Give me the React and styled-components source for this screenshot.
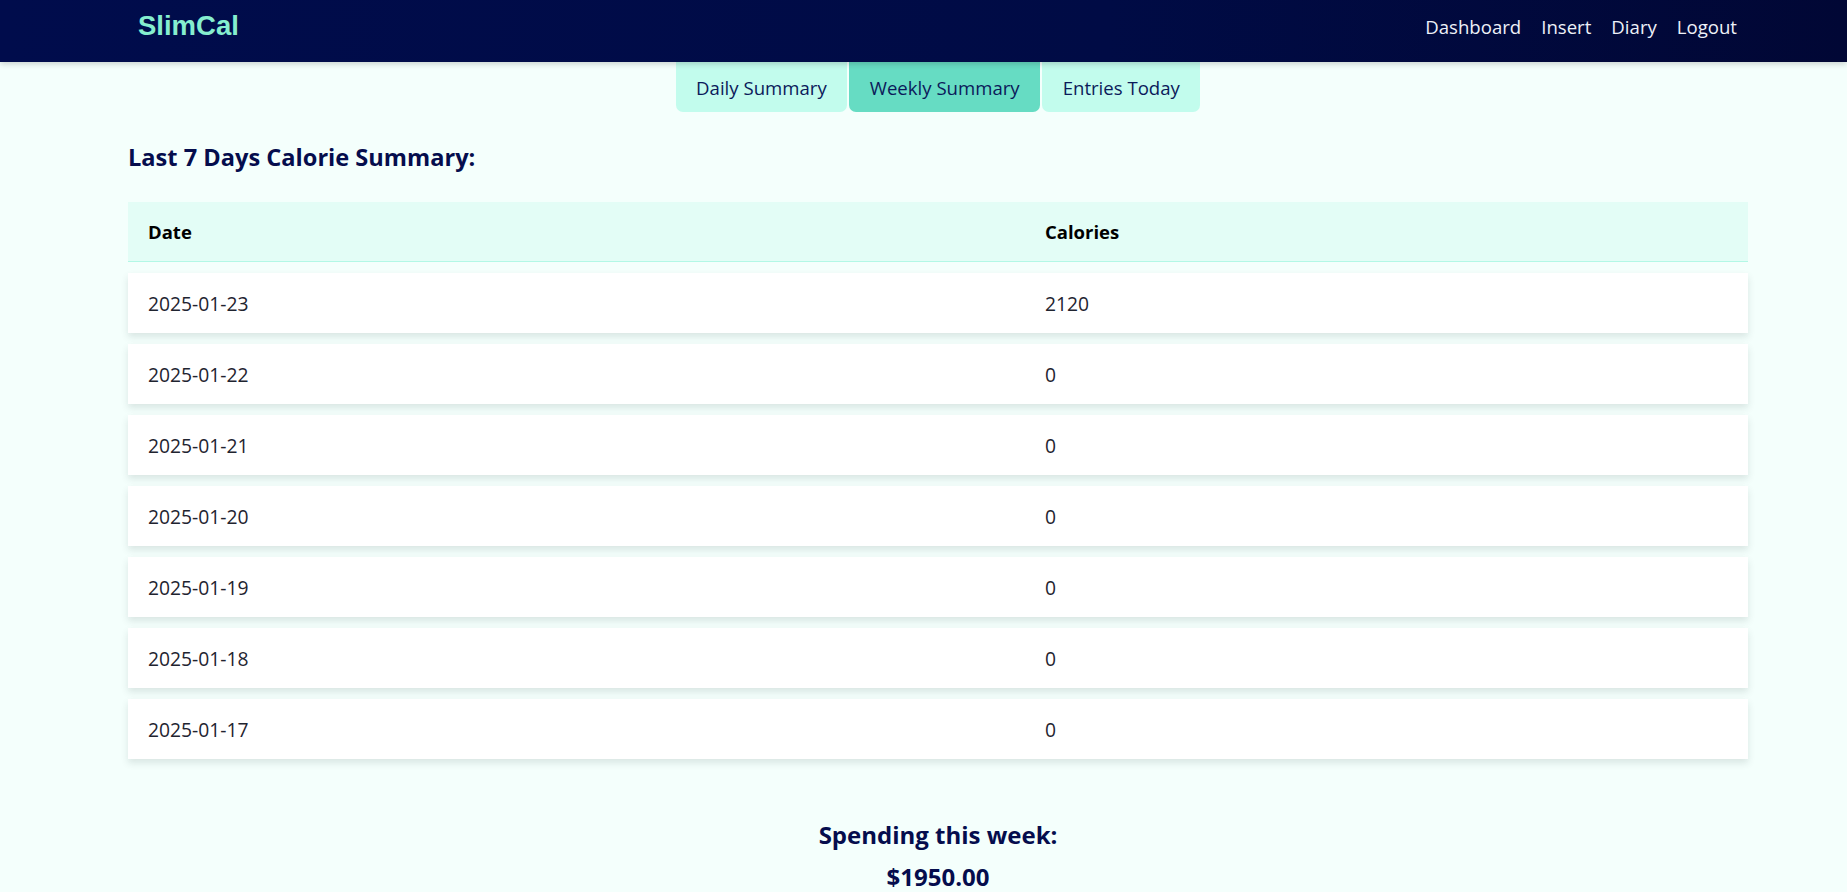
import React from 'react'
import styled, { createGlobalStyle } from 'styled-components'

const GlobalStyle = createGlobalStyle`
  body {
    margin: 0;
    background: #f4fffc;
    font-family: 'Open Sans', 'Noto Sans', sans-serif;
  }
`

const Navbar = styled.nav`
  position: relative;
  z-index: 2;
  height: 62px;
  box-sizing: border-box;
  padding: 0 110px 10px 138px;
  display: flex;
  align-items: center;
  justify-content: space-between;
  background: linear-gradient(90deg, #000c4c 0%, #000b45 60%, #010735 100%);
  box-shadow: 0 2px 6px rgba(0, 0, 0, 0.18);
`

const Logo = styled.div`
  font-family: 'Liberation Sans', Arial, sans-serif;
  font-weight: 700;
  font-size: 27.5px;
  color: #86eecf;
`

const NavLinks = styled.div`
  display: flex;
  gap: 20px;
`

const NavLink = styled.a`
  font-size: 18.6px;
  color: #eef1f8;
  text-decoration: none;
  cursor: pointer;
`

const Main = styled.main`
  padding: 0 99px 0 128px;
`

const TabBar = styled.div`
  display: flex;
  justify-content: center;
  gap: 2px;
`

const Tab = styled.button`
  height: 50px;
  padding: 0 20.5px;
  border: none;
  border-radius: 0 0 7px 7px;
  font-family: inherit;
  font-size: 18.6px;
  color: #0b1a5a;
  background: ${({ active }) => (active ? '#66dcc3' : '#c2fced')};
  cursor: pointer;
`

const Heading = styled.h2`
  margin: 30px 0 30px;
  font-size: 23.6px;
  line-height: 30px;
  font-weight: 700;
  color: #050d4d;
`

const Table = styled.div`
  display: flex;
  flex-direction: column;
  gap: 11px;
`

const Row = styled.div`
  display: grid;
  grid-template-columns: 897px 1fr;
  height: ${({ head }) => (head ? '59px' : '60px')};
  align-items: center;
  background: ${({ head }) => (head ? '#e3fdf6' : '#ffffff')};
  border-bottom: ${({ head }) => (head ? '1.5px solid #b3f8e6' : 'none')};
  box-shadow: ${({ head }) => (head ? 'none' : '0 4px 7px rgba(40, 60, 60, 0.13)')};
`

const Cell = styled.div`
  padding: 0 20px;
  font-size: ${({ head }) => (head ? '18.5px' : '19.3px')};
  font-weight: ${({ head }) => (head ? 700 : 400)};
  color: ${({ head }) => (head ? '#000000' : '#1f2430')};
`

const Spending = styled.section`
  margin-top: 61px;
  display: flex;
  flex-direction: column;
  align-items: center;
  gap: 12px;
`

const SpendLine = styled.h3`
  margin: 0;
  font-size: 24px;
  line-height: 30px;
  font-weight: 700;
  color: #050d4d;
`

const days = [
  { date: '2025-01-23', calories: 2120 },
  { date: '2025-01-22', calories: 0 },
  { date: '2025-01-21', calories: 0 },
  { date: '2025-01-20', calories: 0 },
  { date: '2025-01-19', calories: 0 },
  { date: '2025-01-18', calories: 0 },
  { date: '2025-01-17', calories: 0 },
]

export default function App() {
  return (
    <>
      <GlobalStyle />
      <Navbar>
        <Logo>SlimCal</Logo>
        <NavLinks>
          <NavLink>Dashboard</NavLink>
          <NavLink>Insert</NavLink>
          <NavLink>Diary</NavLink>
          <NavLink>Logout</NavLink>
        </NavLinks>
      </Navbar>
      <Main>
        <TabBar>
          <Tab>Daily Summary</Tab>
          <Tab active>Weekly Summary</Tab>
          <Tab>Entries Today</Tab>
        </TabBar>
        <Heading>Last 7 Days Calorie Summary:</Heading>
        <Table>
          <Row head>
            <Cell head>Date</Cell>
            <Cell head>Calories</Cell>
          </Row>
          {days.map(d => (
            <Row key={d.date}>
              <Cell>{d.date}</Cell>
              <Cell>{d.calories}</Cell>
            </Row>
          ))}
        </Table>
        <Spending>
          <SpendLine>Spending this week:</SpendLine>
          <SpendLine>$1950.00</SpendLine>
        </Spending>
      </Main>
    </>
  )
}
